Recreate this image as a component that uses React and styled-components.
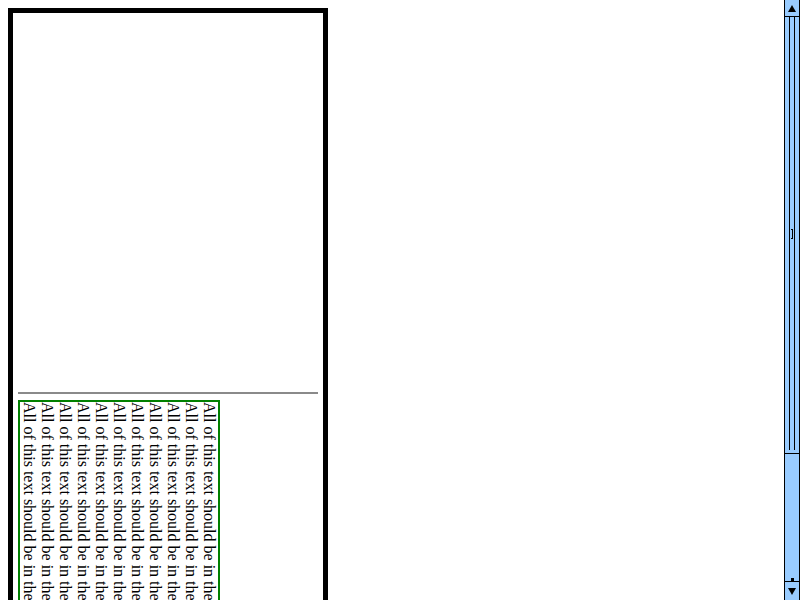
import React from 'react'
import styled, { createGlobalStyle } from 'styled-components'

const LINE = 'All of this text should be in the green box.'
const lines = Array.from({ length: 11 }, () => LINE)

const GlobalStyle = createGlobalStyle`
  html, body {
    margin: 0;
    padding: 0;
    height: 100%;
    overflow: hidden;
    background: #fff;
  }
  #root {
    height: 100%;
  }
`

const Viewport = styled.div`
  display: flex;
  height: 100vh;
`

const Page = styled.main`
  flex: 1;
  padding: 8px;
  overflow: hidden;
  font-family: "Liberation Serif", "Times New Roman", serif;
  font-size: 16px;
  color: #000;
`

const Frame = styled.section`
  width: 300px;
  border: 5px solid #000;
  padding: 5px;
`

const Spacer = styled.div`
  height: 374px;
`

const Rule = styled.div`
  height: 0;
  border-top: 2px solid #8a8a8a;
  margin-bottom: 6px;
`

const GreenBox = styled.div`
  width: 198px;
  height: 300px;
  border: 2px solid #008000;
  writing-mode: vertical-rl;
  line-height: 18px;
  overflow: hidden;
`

const Line = styled.div`
  white-space: nowrap;
`

/* scrollbar drawn at the right edge */
const Scrollbar = styled.aside`
  width: 16px;
  display: flex;
  flex-direction: column;
  background: #99ccff;
  border-left: 1px solid #000;
  box-sizing: border-box;
`

const ArrowButton = styled.div`
  height: ${p => p.$h}px;
  display: flex;
  align-items: center;
  justify-content: center;
  border-${p => (p.$down ? 'top' : 'bottom')}: 1px solid #000;
  border-right: 1px solid #000;
  box-sizing: border-box;

  &::after {
    content: '';
    width: 0;
    height: 0;
    border-left: 4px solid transparent;
    border-right: 4px solid transparent;
    ${p => (p.$down ? 'border-top' : 'border-bottom')}: 7px solid #000;
  }
`

const Track = styled.div`
  flex: 1;
  display: flex;
  flex-direction: column;
  border-right: 1px solid #000;
`

const Thumb = styled.div`
  height: 437px;
  display: flex;
  justify-content: center;
  box-sizing: border-box;
  border-bottom: 1px solid #000;
  padding-bottom: 3px;
`

const Ridge = styled.div`
  width: 6px;
  box-sizing: border-box;
  border-left: 1px solid #000;
  border-right: 1px solid #000;
  display: flex;
  align-items: center;
  justify-content: center;
`

const Grip = styled.div`
  width: 2px;
  height: 8px;
  border-top: 1px solid #000;
  border-bottom: 1px solid #000;
  background: linear-gradient(#000, #000) center / 1px 100% no-repeat;
`

const Gutter = styled.div`
  flex: 1;
  display: flex;
  align-items: flex-end;
  justify-content: center;
`

const Stub = styled.div`
  width: 3px;
  height: 3px;
  background: #000;
`

export default function App() {
  return (
    <>
      <GlobalStyle />
      <Viewport>
        <Page>
          <Frame>
            <Spacer />
            <Rule />
            <GreenBox>
              {lines.map((t, i) => (
                <Line key={i}>{t}</Line>
              ))}
            </GreenBox>
          </Frame>
        </Page>
        <Scrollbar>
          <ArrowButton $h={17} />
          <Track>
            <Thumb>
              <Ridge>
                <Grip />
              </Ridge>
            </Thumb>
            <Gutter>
              <Stub />
            </Gutter>
          </Track>
          <ArrowButton $h={19} $down />
        </Scrollbar>
      </Viewport>
    </>
  )
}
